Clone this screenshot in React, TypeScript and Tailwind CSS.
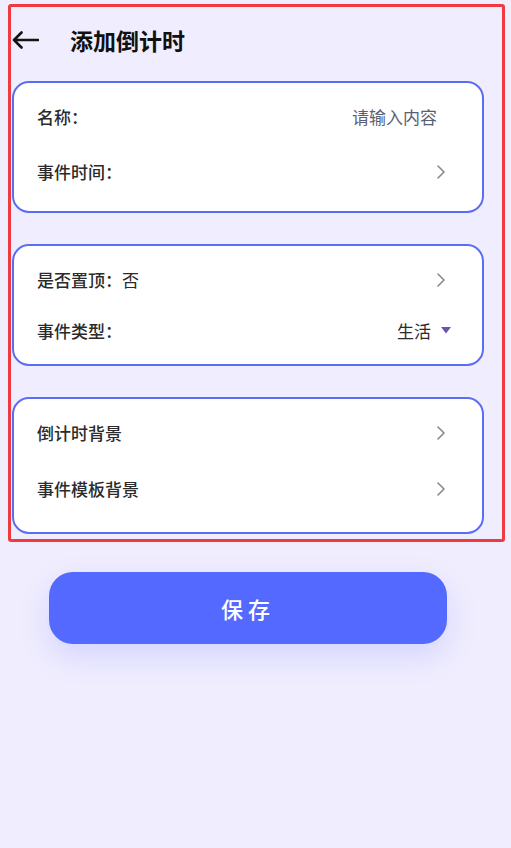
import React from "react";

function Chevron() {
  return (
    <svg width="8" height="14" viewBox="0 0 8 14" fill="none">
      <path d="M1 1 L7 7 L1 13" stroke="#8a8a8a" strokeWidth="1.6" strokeLinecap="round" strokeLinejoin="round" />
    </svg>
  );
}

function Row({ h, label, value, right }: { h: string; label: string; value?: string; right?: React.ReactNode }) {
  return (
    <div className={`flex items-center justify-between pl-[23px] ${h}`}>
      <div className="text-[17px] text-[#2b2b2b]">
        <span className="font-medium">{label}</span>
        {value && <span className="font-normal">{value}</span>}
      </div>
      {right}
    </div>
  );
}

const chevronRight = (
  <div className="pr-[37px] flex items-center">
    <Chevron />
  </div>
);

export default function App() {
  return (
    <div
      className="min-h-[848px] w-[511px] bg-[#f0edfe] pt-[4px] pl-[8px]"
      style={{ fontFamily: '"Noto Sans CJK SC", "Noto Sans", sans-serif' }}
    >
      <div className="w-[497px] border-[3px] border-[#ef3b40] rounded-[3px] pl-[1px] pb-[5px]">
        <div className="h-[66px] flex items-center">
          <svg width="27" height="18" viewBox="0 0 27 18" fill="none">
            <path d="M26 9 H2 M9.5 1.5 L2 9 L9.5 16.5" stroke="#141414" strokeWidth="2.6" strokeLinecap="round" strokeLinejoin="round" />
          </svg>
          <h1 className="ml-[31px] text-[23px] font-bold text-[#111]">添加倒计时</h1>
        </div>
        <div className="mt-[8px] flex flex-col gap-[31px]">
          <div className="w-[472px] bg-white border-2 border-[#5b6df0] rounded-[17px] pt-[6px] pb-[12px]">
            <Row
              h="h-[55px]"
              label="名称："
              right={<span className="pr-[45px] text-[17px] text-[#596076]">请输入内容</span>}
            />
            <Row h="h-[55px]" label="事件时间：" right={chevronRight} />
          </div>
          <div className="w-[472px] bg-white border-2 border-[#5b6df0] rounded-[17px] py-[8px]">
            <Row h="h-[51px]" label="是否置顶：" value="否" right={chevronRight} />
            <Row
              h="h-[51px]"
              label="事件类型："
              right={
                <div className="flex items-center pr-[31px]">
                  <span className="text-[17px] text-[#2b2b2b]">生活</span>
                  <svg className="ml-[10px]" width="10" height="7" viewBox="0 0 10 7">
                    <path d="M0 0 H10 L5 6.5 Z" fill="#6e54b0" />
                  </svg>
                </div>
              }
            />
          </div>
          <div className="w-[472px] bg-white border-2 border-[#5b6df0] rounded-[17px] pt-[6px] pb-[15px]">
            <Row h="h-[56px]" label="倒计时背景" right={chevronRight} />
            <Row h="h-[56px]" label="事件模板背景" right={chevronRight} />
          </div>
        </div>
      </div>
      <button className="mt-[30px] ml-[41px] w-[398px] h-[72px] rounded-[24px] bg-[#5469ff] text-white text-[22px] font-medium tracking-[5px] shadow-[0_12px_30px_rgba(84,104,255,0.18)] flex items-center justify-center">
        保存
      </button>
    </div>
  );
}
